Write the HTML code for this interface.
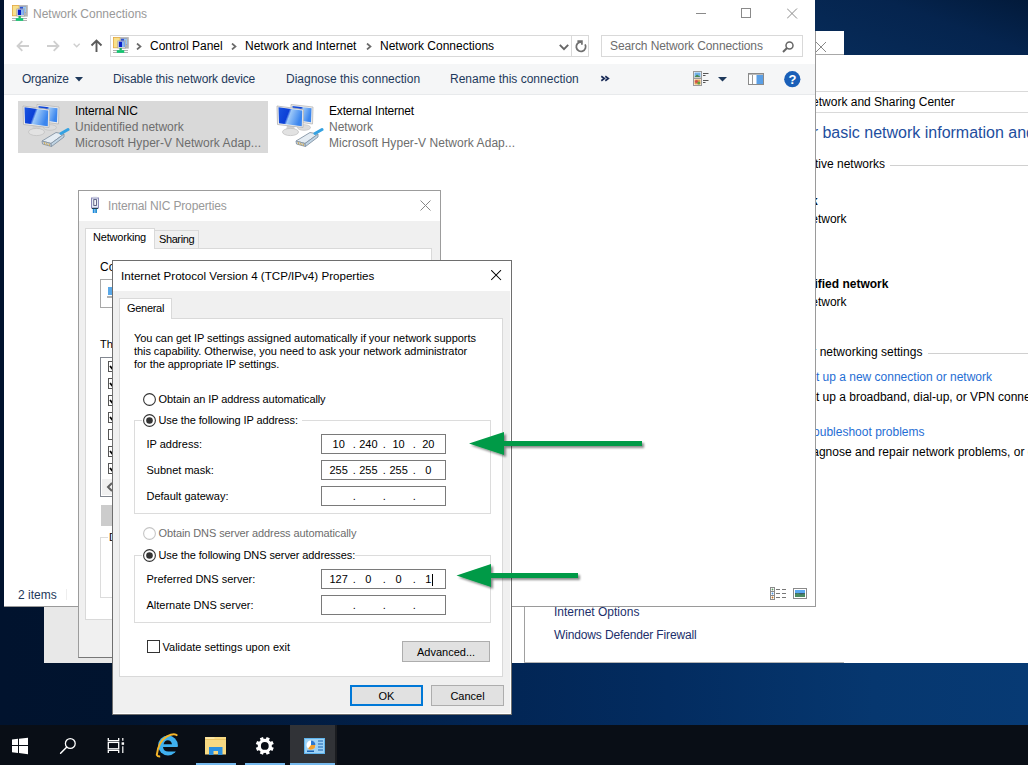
<!DOCTYPE html><html><head><meta charset="utf-8"><style>
html,body{margin:0;padding:0;width:1028px;height:765px;overflow:hidden;position:relative;font-family:"Liberation Sans", sans-serif;}
body{background:linear-gradient(90deg,#01132e 0%,#01142f 12%,#022554 48%,#032c60 65%,#06376f 85%,#073a74 100%);}
</style></head><body>
<div style="position:absolute;left:815px;top:0px;width:213px;height:55px;background:linear-gradient(200deg,#021a3a 0%,#05244e 40%,#072c5a 100%);"></div>
<div style="position:absolute;left:0px;top:0px;width:4px;height:725px;background:#01132e;"></div>
<div style="position:absolute;left:511px;top:55px;width:517px;height:608px;background:#fff;"></div>
<div style="position:absolute;left:524px;top:662px;width:320px;height:1px;background:#b4b4b4;"></div>
<div style="position:absolute;left:815px;top:31px;width:29px;height:24px;background:#fff;"></div>
<svg style="position:absolute;left:815px;top:41px;" width="12" height="12" viewBox="0 0 12 12"><path d="M1 1 L11 11 M11 1 L1 11" stroke="#888" stroke-width="1"/></svg>
<div style="position:absolute;left:815px;top:54px;width:29px;height:1px;background:#a8a8a8;"></div>
<div style="position:absolute;left:815px;top:91px;width:213px;height:1px;background:#d9d9d9;"></div>
<div style="position:absolute;left:354.79999999999995px;width:600px;text-align:right;top:95.84px;font-size:12px;line-height:12px;color:#000;font-weight:normal;white-space:pre;">Network and Sharing Center</div>
<div style="position:absolute;left:815px;top:112px;width:213px;height:1px;background:#d9d9d9;"></div>
<div style="position:absolute;left:812.7px;top:125.46px;font-size:16px;line-height:16px;color:#1e4e9e;font-weight:normal;white-space:pre;">r basic network information and set up connections</div>
<div style="position:absolute;left:285px;width:600px;text-align:right;top:157.84px;font-size:12px;line-height:12px;color:#000;font-weight:normal;white-space:pre;">Active networks</div>
<div style="position:absolute;left:890px;top:165px;width:138px;height:1px;background:#d0d0d0;"></div>
<div style="position:absolute;left:217.79999999999995px;width:600px;text-align:right;top:194.84px;font-size:12px;line-height:12px;color:#000;font-weight:bold;white-space:pre;">Network</div>
<div style="position:absolute;left:246.60000000000002px;width:600px;text-align:right;top:212.84px;font-size:12px;line-height:12px;color:#000;font-weight:normal;white-space:pre;">Public network</div>
<div style="position:absolute;left:288.4px;width:600px;text-align:right;top:277.84px;font-size:12px;line-height:12px;color:#000;font-weight:bold;white-space:pre;">Unidentified network</div>
<div style="position:absolute;left:246.60000000000002px;width:600px;text-align:right;top:295.84px;font-size:12px;line-height:12px;color:#000;font-weight:normal;white-space:pre;">Public network</div>
<div style="position:absolute;left:322.4px;width:600px;text-align:right;top:345.84px;font-size:12px;line-height:12px;color:#000;font-weight:normal;white-space:pre;">Change your networking settings</div>
<div style="position:absolute;left:928px;top:353px;width:100px;height:1px;background:#d0d0d0;"></div>
<div style="position:absolute;left:392px;width:600px;text-align:right;top:370.84px;font-size:12px;line-height:12px;color:#1f6ed4;font-weight:normal;white-space:pre;">Set up a new connection or network</div>
<div style="position:absolute;left:815.9px;top:390.84px;font-size:12px;line-height:12px;color:#000;font-weight:normal;white-space:pre;margin-left:0px;">t up a broadband, dial-up, or VPN connection</div>
<div style="position:absolute;left:324.5px;width:600px;text-align:right;top:425.84px;font-size:12px;line-height:12px;color:#1f6ed4;font-weight:normal;white-space:pre;">Troubleshoot problems</div>
<div style="position:absolute;left:410.4px;width:600px;text-align:right;top:445.84px;font-size:12px;line-height:12px;color:#000;font-weight:normal;white-space:pre;">Diagnose and repair network problems,</div>
<div style="position:absolute;left:1010.4px;top:445.84px;font-size:12px;line-height:12px;color:#000;font-weight:normal;white-space:pre;"> or get</div>
<div style="position:absolute;left:524px;top:606px;width:1px;height:56px;background:#a0a0a0;"></div>
<div style="position:absolute;left:554px;top:605.84px;font-size:12px;line-height:12px;color:#1c2f6b;font-weight:normal;white-space:pre;">Internet Options</div>
<div style="position:absolute;left:554px;top:628.84px;font-size:12px;line-height:12px;color:#1c2f6b;font-weight:normal;white-space:pre;letter-spacing:-0.14px;">Windows Defender Firewall</div>
<div style="position:absolute;left:44px;top:500px;width:467px;height:163px;background:#e8e8e8;"></div>
<div style="position:absolute;left:4px;top:0px;width:811px;height:607px;background:#fff;"></div>
<div style="position:absolute;left:815px;top:31px;width:1px;height:576px;background:#9a9a9a;"></div>
<div style="position:absolute;left:4px;top:606px;width:812px;height:1px;background:#9a9a9a;"></div>
<svg style="position:absolute;left:12px;top:5px;" width="16" height="16" viewBox="0 0 16 16"><path d="M0 13.5 H15 M0 15.5 H15" stroke="#b0b0b0" stroke-width="1"/><rect x="0.4" y="0.4" width="6.8" height="10.4" fill="#f8e08a" stroke="#e3a73f" stroke-width="0.8"/><rect x="6.9" y="0.1" width="8.9" height="11.5" fill="#b4b4b4"/><rect x="8" y="1.8" width="6" height="5.7" fill="#2a50d8"/><rect x="11" y="1.8" width="3" height="5.7" fill="#9ac8f0"/><rect x="4.8" y="3.9" width="7.9" height="7.1" fill="#ececec" stroke="#9a9a9a" stroke-width="0.6"/><rect x="5.8" y="4.6" width="6" height="5.4" fill="#0a20c8"/><rect x="9" y="4.6" width="2.8" height="5.4" fill="#8ab8f0"/><rect x="6.5" y="11" width="2.3" height="2.2" fill="#20b060"/><rect x="3.8" y="13.2" width="7.4" height="2.6" fill="#10c870"/></svg>
<div style="position:absolute;left:33px;top:7.84px;font-size:12px;line-height:12px;color:#999;font-weight:normal;white-space:pre;">Network Connections</div>
<div style="position:absolute;left:696px;top:13px;width:10px;height:1px;background:#8a8a8a;"></div>
<div style="position:absolute;left:741px;top:8px;width:10px;height:10px;background:none;border:1px solid #8a8a8a;box-sizing:border-box;"></div>
<svg style="position:absolute;left:787px;top:8px;" width="11" height="11" viewBox="0 0 11 11"><path d="M0 0.5 L10 10.5 M10 0.5 L0 10.5" stroke="#8a8a8a" stroke-width="1"/></svg>
<svg style="position:absolute;left:16px;top:40px;" width="14" height="12" viewBox="0 0 14 12"><path d="M1.5 6 H13 M6.3 1.2 L1.5 6 L6.3 10.8" stroke="#cfcfcf" stroke-width="1.8" fill="none"/></svg>
<svg style="position:absolute;left:46px;top:40px;" width="14" height="12" viewBox="0 0 14 12"><path d="M1 6 H12.5 M7.7 1.2 L12.5 6 L7.7 10.8" stroke="#cfcfcf" stroke-width="1.8" fill="none"/></svg>
<svg style="position:absolute;left:73px;top:43px;" width="8" height="5" viewBox="0 0 8 5"><path d="M0.7 0.7 L3.7 3.7 L6.7 0.7" stroke="#cfcfcf" stroke-width="1.4" fill="none"/></svg>
<svg style="position:absolute;left:90px;top:39px;" width="13" height="13" viewBox="0 0 13 13"><path d="M6.5 1.5 V13 M1.5 6.5 L6.5 1.5 L11.5 6.5" stroke="#5a5a5a" stroke-width="1.9" fill="none"/></svg>
<div style="position:absolute;left:110px;top:35px;width:479px;height:22px;background:#fff;border:1px solid #d9d9d9;box-sizing:border-box;"></div>
<div style="position:absolute;left:571px;top:35px;width:1px;height:22px;background:#d9d9d9;"></div>
<svg style="position:absolute;left:113px;top:37px;" width="16" height="16" viewBox="0 0 16 16"><path d="M0 13.5 H15 M0 15.5 H15" stroke="#b0b0b0" stroke-width="1"/><rect x="0.4" y="0.4" width="6.8" height="10.4" fill="#f8e08a" stroke="#e3a73f" stroke-width="0.8"/><rect x="6.9" y="0.1" width="8.9" height="11.5" fill="#b4b4b4"/><rect x="8" y="1.8" width="6" height="5.7" fill="#2a50d8"/><rect x="11" y="1.8" width="3" height="5.7" fill="#9ac8f0"/><rect x="4.8" y="3.9" width="7.9" height="7.1" fill="#ececec" stroke="#9a9a9a" stroke-width="0.6"/><rect x="5.8" y="4.6" width="6" height="5.4" fill="#0a20c8"/><rect x="9" y="4.6" width="2.8" height="5.4" fill="#8ab8f0"/><rect x="6.5" y="11" width="2.3" height="2.2" fill="#20b060"/><rect x="3.8" y="13.2" width="7.4" height="2.6" fill="#10c870"/></svg>
<svg style="position:absolute;left:136px;top:43px;" width="6" height="7" viewBox="0 0 6 7"><path d="M1 0.5 L4.5 3.5 L1 6.5" stroke="#6a6a6a" stroke-width="1.7" fill="none"/></svg>
<div style="position:absolute;left:150px;top:39.84px;font-size:12px;line-height:12px;color:#000;font-weight:normal;white-space:pre;">Control Panel</div>
<svg style="position:absolute;left:231px;top:43px;" width="6" height="7" viewBox="0 0 6 7"><path d="M1 0.5 L4.5 3.5 L1 6.5" stroke="#6a6a6a" stroke-width="1.7" fill="none"/></svg>
<div style="position:absolute;left:245px;top:39.84px;font-size:12px;line-height:12px;color:#000;font-weight:normal;white-space:pre;">Network and Internet</div>
<svg style="position:absolute;left:366px;top:43px;" width="6" height="7" viewBox="0 0 6 7"><path d="M1 0.5 L4.5 3.5 L1 6.5" stroke="#6a6a6a" stroke-width="1.7" fill="none"/></svg>
<div style="position:absolute;left:380px;top:39.84px;font-size:12px;line-height:12px;color:#000;font-weight:normal;white-space:pre;">Network Connections</div>
<svg style="position:absolute;left:559px;top:44px;" width="10" height="7" viewBox="0 0 10 7"><path d="M0.8 0.8 L5 5.2 L9.2 0.8" stroke="#666" stroke-width="1.9" fill="none"/></svg>
<svg style="position:absolute;left:572px;top:38px;" width="16" height="16" viewBox="0 0 16 16"><path d="M13.07 6.35 A4.7 4.7 0 1 1 9 4" stroke="#707070" stroke-width="1.8" fill="none"/><path d="M5.4 3.1 H9.9 V6.8" stroke="#707070" stroke-width="1.7" fill="none"/></svg>
<div style="position:absolute;left:601px;top:35px;width:202px;height:22px;background:#fff;border:1px solid #d9d9d9;box-sizing:border-box;"></div>
<div style="position:absolute;left:610px;top:39.84px;font-size:12px;line-height:12px;color:#6d6d6d;font-weight:normal;white-space:pre;letter-spacing:-0.1px;">Search Network Connections</div>
<svg style="position:absolute;left:782px;top:41px;" width="13" height="12" viewBox="0 0 13 12"><circle cx="7.5" cy="4.5" r="3.5" stroke="#666" stroke-width="1.5" fill="none"/><path d="M5 7 L1 11" stroke="#666" stroke-width="2"/></svg>
<div style="position:absolute;left:4px;top:64px;width:811px;height:31px;background:#f5f6f7;"></div>
<div style="position:absolute;left:4px;top:94px;width:811px;height:1px;background:#e8eaec;"></div>
<div style="position:absolute;left:22px;top:72.84px;font-size:12px;line-height:12px;color:#1e395b;font-weight:normal;white-space:pre;letter-spacing:-0.25px;">Organize</div>
<svg style="position:absolute;left:75px;top:77px;" width="8" height="5" viewBox="0 0 8 5"><path d="M0 0 H8 L4 4.5 Z" fill="#1e395b"/></svg>
<div style="position:absolute;left:113px;top:72.84px;font-size:12px;line-height:12px;color:#1e395b;font-weight:normal;white-space:pre;letter-spacing:-0.12px;">Disable this network device</div>
<div style="position:absolute;left:286px;top:72.84px;font-size:12px;line-height:12px;color:#1e395b;font-weight:normal;white-space:pre;">Diagnose this connection</div>
<div style="position:absolute;left:450px;top:72.84px;font-size:12px;line-height:12px;color:#1e395b;font-weight:normal;white-space:pre;">Rename this connection</div>
<svg style="position:absolute;left:598px;top:73px;" width="14" height="11" viewBox="0 0 14 11"><path d="M3.3 3.3 L6.3 5.5 L3.3 7.7 M7.3 3.3 L10.3 5.5 L7.3 7.7" stroke="#1a2c58" stroke-width="1.7" fill="none"/></svg>
<svg style="position:absolute;left:693px;top:71px;" width="17" height="15" viewBox="0 0 17 15"><rect x="0.5" y="0.5" width="8" height="6.5" fill="#fff" stroke="#9a9a9a"/><rect x="1.5" y="1.5" width="6" height="4.5" fill="#6fb0e8"/><path d="M1.5 6 L4 3.5 L7.5 6 Z" fill="#4a8a50"/><rect x="0.5" y="7.5" width="8" height="7" fill="#fff" stroke="#9a9a9a"/><rect x="1.5" y="8.5" width="6" height="5" fill="#e0a050"/><circle cx="3.5" cy="10.5" r="1.6" fill="#d05050"/><circle cx="5.8" cy="12" r="1.5" fill="#60a040"/><path d="M10 2.5 H15.5 M10 4.5 H12.5 M10 9.5 H15.5 M10 11.5 H12.5" stroke="#555" stroke-width="1"/></svg>
<svg style="position:absolute;left:718px;top:77px;" width="9" height="5" viewBox="0 0 9 5"><path d="M0 0 H9 L4.5 4.5 Z" fill="#1e395b"/></svg>
<svg style="position:absolute;left:748px;top:73px;" width="16" height="12" viewBox="0 0 16 12"><rect x="0.5" y="0.5" width="15" height="11" fill="#fff" stroke="#8a8a8a"/><rect x="1" y="1" width="14" height="1" fill="#bbb"/><rect x="8.5" y="2" width="6.5" height="9" fill="#5a9fe6"/><path d="M4.5 2 V11" stroke="#9a9a9a"/></svg>
<svg style="position:absolute;left:784px;top:71px;" width="17" height="17" viewBox="0 0 17 17"><circle cx="8.3" cy="8.2" r="8.1" fill="#1a5fb8"/><text x="8.4" y="13.2" font-family="Liberation Sans" font-weight="bold" font-size="13" fill="#fff" text-anchor="middle">?</text></svg>
<div style="position:absolute;left:18px;top:101px;width:250px;height:52px;background:#d9d9d9;"></div>
<svg style="position:absolute;left:18px;top:100px;" width="52" height="52" viewBox="0 0 52 52">
<defs><linearGradient id="scr" x1="0" y1="0" x2="1" y2="0.3"><stop offset="0" stop-color="#1a55e0"/><stop offset="0.45" stop-color="#0b3fd6"/><stop offset="0.55" stop-color="#9cc8f8"/><stop offset="1" stop-color="#3c86ee"/></linearGradient></defs>
<ellipse cx="32" cy="27.5" rx="6.5" ry="2.8" fill="#dcdcdc" stroke="#c4c4c4" stroke-width="0.8"/>
<path d="M19 4.5 L41 7 L40.5 24 L19 21 Z" fill="#ececec" stroke="#b8b8b8" stroke-width="0.8"/>
<path d="M20.5 6 L39.5 8.3 L39 22.3 L20.5 19.5 Z" fill="url(#scr)"/>
<path d="M15 25 L22 25 L23 31 L14 31 Z" fill="#d0d0d0"/>
<ellipse cx="18.5" cy="32" rx="8" ry="3.6" fill="#e2e2e2" stroke="#c2c2c2" stroke-width="0.8"/>
<path d="M5 6 L31.5 9.5 L31 27.5 L5.5 24.5 Z" fill="#efefef" stroke="#b4b4b4" stroke-width="0.8"/>
<path d="M6.5 7.3 L30.2 10.5 L29.8 26.2 L7 23.3 Z" fill="url(#scr)"/>
<path d="M24 41 L38 32.5 L46 34 L33 43.5 Z" fill="#e4ecf3" stroke="#8494a4" stroke-width="0.9"/>
<path d="M24 41 L24.5 44 L33.5 46.5 L33 43.5 Z" fill="#cdd6df" stroke="#8494a4" stroke-width="0.9"/>
<path d="M33.5 46.5 L46 37 L46 34 L33 43.5 Z" fill="#c0d4e4" stroke="#8494a4" stroke-width="0.9"/>
<path d="M26 42 L27 44.5 M28.5 42.8 L29.3 45.2 M31 43.5 L31.6 45.8" stroke="#d0a030" stroke-width="0.8"/>
<path d="M43 33.5 L50 29.5" stroke="#35a2e2" stroke-width="3" stroke-linecap="round"/>
</svg>
<div style="position:absolute;left:75px;top:104.84px;font-size:12px;line-height:12px;color:#000;font-weight:normal;white-space:pre;letter-spacing:-0.1px;">Internal NIC</div>
<div style="position:absolute;left:75px;top:120.84px;font-size:12px;line-height:12px;color:#6d6d6d;font-weight:normal;white-space:pre;">Unidentified network</div>
<div style="position:absolute;left:75px;top:136.84px;font-size:12px;line-height:12px;color:#6d6d6d;font-weight:normal;white-space:pre;letter-spacing:0.06px;">Microsoft Hyper-V Network Adap...</div>
<svg style="position:absolute;left:272px;top:100px;" width="52" height="52" viewBox="0 0 52 52">
<defs><linearGradient id="scr" x1="0" y1="0" x2="1" y2="0.3"><stop offset="0" stop-color="#1a55e0"/><stop offset="0.45" stop-color="#0b3fd6"/><stop offset="0.55" stop-color="#9cc8f8"/><stop offset="1" stop-color="#3c86ee"/></linearGradient></defs>
<ellipse cx="32" cy="27.5" rx="6.5" ry="2.8" fill="#dcdcdc" stroke="#c4c4c4" stroke-width="0.8"/>
<path d="M19 4.5 L41 7 L40.5 24 L19 21 Z" fill="#ececec" stroke="#b8b8b8" stroke-width="0.8"/>
<path d="M20.5 6 L39.5 8.3 L39 22.3 L20.5 19.5 Z" fill="url(#scr)"/>
<path d="M15 25 L22 25 L23 31 L14 31 Z" fill="#d0d0d0"/>
<ellipse cx="18.5" cy="32" rx="8" ry="3.6" fill="#e2e2e2" stroke="#c2c2c2" stroke-width="0.8"/>
<path d="M5 6 L31.5 9.5 L31 27.5 L5.5 24.5 Z" fill="#efefef" stroke="#b4b4b4" stroke-width="0.8"/>
<path d="M6.5 7.3 L30.2 10.5 L29.8 26.2 L7 23.3 Z" fill="url(#scr)"/>
<path d="M24 41 L38 32.5 L46 34 L33 43.5 Z" fill="#e4ecf3" stroke="#8494a4" stroke-width="0.9"/>
<path d="M24 41 L24.5 44 L33.5 46.5 L33 43.5 Z" fill="#cdd6df" stroke="#8494a4" stroke-width="0.9"/>
<path d="M33.5 46.5 L46 37 L46 34 L33 43.5 Z" fill="#c0d4e4" stroke="#8494a4" stroke-width="0.9"/>
<path d="M26 42 L27 44.5 M28.5 42.8 L29.3 45.2 M31 43.5 L31.6 45.8" stroke="#d0a030" stroke-width="0.8"/>
<path d="M43 33.5 L50 29.5" stroke="#35a2e2" stroke-width="3" stroke-linecap="round"/>
</svg>
<div style="position:absolute;left:329px;top:104.84px;font-size:12px;line-height:12px;color:#000;font-weight:normal;white-space:pre;letter-spacing:-0.18px;">External Internet</div>
<div style="position:absolute;left:329px;top:120.84px;font-size:12px;line-height:12px;color:#6d6d6d;font-weight:normal;white-space:pre;">Network</div>
<div style="position:absolute;left:329px;top:136.84px;font-size:12px;line-height:12px;color:#6d6d6d;font-weight:normal;white-space:pre;letter-spacing:0.06px;">Microsoft Hyper-V Network Adap...</div>
<div style="position:absolute;left:18px;top:588.84px;font-size:12px;line-height:12px;color:#1e395b;font-weight:normal;white-space:pre;">2 items</div>
<div style="position:absolute;left:66px;top:589px;width:1px;height:11px;background:#eeeeee;"></div>
<svg style="position:absolute;left:770px;top:587px;" width="18" height="13" viewBox="0 0 18 13"><rect x="0.5" y="0.5" width="4" height="12" fill="#fff" stroke="#8a8a8a"/><path d="M0.5 4.5 H4.5 M0.5 8.5 H4.5" stroke="#8a8a8a"/><circle cx="2.5" cy="2.5" r="0.9" fill="#5a9a60"/><circle cx="2.5" cy="6.5" r="0.9" fill="#4a90e0"/><circle cx="2.5" cy="10.5" r="0.9" fill="#c07020"/><path d="M6 2.5 H10 M12 2.5 H16 M6 6.5 H10 M12 6.5 H16 M6 10.5 H10 M12 10.5 H16" stroke="#777" stroke-width="1.1"/></svg>
<svg style="position:absolute;left:793px;top:588px;" width="14" height="11" viewBox="0 0 14 11"><rect x="0.5" y="0.5" width="13" height="10" fill="#fff" stroke="#8a8a8a"/><rect x="2" y="2" width="10" height="7" fill="#5aa8f0"/><rect x="2" y="5" width="10" height="4" fill="#3a5a70"/><path d="M2 6 L5 5 L8 6.5 L12 5.5 V9 H2 Z" fill="#4a8a60"/></svg>
<div style="position:absolute;left:78px;top:190px;width:363px;height:468px;background:#f0f0f0;border:1px solid #9c9c9c;box-sizing:border-box;border-bottom-color:#777;"></div>
<div style="position:absolute;left:79px;top:191px;width:361px;height:30px;background:#fff;"></div>
<svg style="position:absolute;left:86px;top:194px;" width="18" height="22" viewBox="0 0 18 22"><rect x="5.5" y="4" width="7" height="10" fill="#e4ecf4" stroke="#8a88b8" stroke-width="1"/><rect x="7" y="2.8" width="4" height="1.4" fill="#c8cce0"/><rect x="7.8" y="5.6" width="2.6" height="5.8" fill="#fff" stroke="#505078" stroke-width="0.9"/><rect x="6" y="14" width="6" height="1" fill="#204050"/><rect x="6.8" y="15" width="1.8" height="4" fill="#1a8ae0"/><rect x="9.2" y="15" width="1.8" height="4" fill="#2a90d0"/></svg>
<div style="position:absolute;left:108px;top:199.84px;font-size:12px;line-height:12px;color:#999;font-weight:normal;white-space:pre;letter-spacing:-0.15px;">Internal NIC Properties</div>
<svg style="position:absolute;left:420px;top:200px;" width="11" height="11" viewBox="0 0 11 11"><path d="M0.5 0.5 L10.5 10.5 M10.5 0.5 L0.5 10.5" stroke="#888" stroke-width="1"/></svg>
<div style="position:absolute;left:85px;top:248px;width:347px;height:372px;background:#fff;border:1px solid #d9d9d9;box-sizing:border-box;"></div>
<div style="position:absolute;left:85px;top:228px;width:70px;height:21px;background:#fff;border:1px solid #d9d9d9;box-sizing:border-box;border-bottom:none;"></div>
<div style="position:absolute;left:155px;top:230px;width:44px;height:18px;background:#f0f0f0;border:1px solid #d9d9d9;box-sizing:border-box;border-bottom:none;border-left:none;"></div>
<div style="position:absolute;left:93px;top:231.69px;font-size:11px;line-height:11px;color:#000;font-weight:normal;white-space:pre;letter-spacing:-0.2px;">Networking</div>
<div style="position:absolute;left:159px;top:233.69px;font-size:11px;line-height:11px;color:#000;font-weight:normal;white-space:pre;letter-spacing:-0.4px;">Sharing</div>
<div style="position:absolute;left:100px;top:261.34px;font-size:12px;line-height:12px;color:#000;font-weight:normal;white-space:pre;">Co</div>
<div style="position:absolute;left:100px;top:279px;width:60px;height:29px;background:#fff;border:1px solid #a8a8a8;box-sizing:border-box;"></div>
<div style="position:absolute;left:108px;top:287px;width:4px;height:8px;background:#5aa8e8;"></div>
<div style="position:absolute;left:107px;top:296px;width:5px;height:2px;background:#b0b0b0;"></div>
<div style="position:absolute;left:100px;top:338.69px;font-size:11px;line-height:11px;color:#000;font-weight:normal;white-space:pre;">Th</div>
<div style="position:absolute;left:100px;top:357px;width:60px;height:140px;background:#fff;border:1px solid #828790;box-sizing:border-box;"></div>
<div style="position:absolute;left:102px;top:479px;width:56px;height:16px;background:#f0f0f0;"></div>
<div style="position:absolute;left:108px;top:361px;width:11px;height:11px;background:#fff;border:1px solid #555;box-sizing:border-box;"></div>
<svg style="position:absolute;left:108px;top:361px;" width="11" height="11" viewBox="0 0 11 11"><path d="M2 5 L4.3 7.8 L9 2.5" stroke="#000" stroke-width="1.8" fill="none"/></svg>
<div style="position:absolute;left:108px;top:378px;width:11px;height:11px;background:#fff;border:1px solid #555;box-sizing:border-box;"></div>
<svg style="position:absolute;left:108px;top:378px;" width="11" height="11" viewBox="0 0 11 11"><path d="M2 5 L4.3 7.8 L9 2.5" stroke="#000" stroke-width="1.8" fill="none"/></svg>
<div style="position:absolute;left:108px;top:395px;width:11px;height:11px;background:#fff;border:1px solid #555;box-sizing:border-box;"></div>
<svg style="position:absolute;left:108px;top:395px;" width="11" height="11" viewBox="0 0 11 11"><path d="M2 5 L4.3 7.8 L9 2.5" stroke="#000" stroke-width="1.8" fill="none"/></svg>
<div style="position:absolute;left:108px;top:412px;width:11px;height:11px;background:#fff;border:1px solid #555;box-sizing:border-box;"></div>
<svg style="position:absolute;left:108px;top:412px;" width="11" height="11" viewBox="0 0 11 11"><path d="M2 5 L4.3 7.8 L9 2.5" stroke="#000" stroke-width="1.8" fill="none"/></svg>
<div style="position:absolute;left:108px;top:429px;width:11px;height:11px;background:#fff;border:1px solid #555;box-sizing:border-box;"></div>
<div style="position:absolute;left:108px;top:446px;width:11px;height:11px;background:#fff;border:1px solid #555;box-sizing:border-box;"></div>
<svg style="position:absolute;left:108px;top:446px;" width="11" height="11" viewBox="0 0 11 11"><path d="M2 5 L4.3 7.8 L9 2.5" stroke="#000" stroke-width="1.8" fill="none"/></svg>
<div style="position:absolute;left:108px;top:463px;width:11px;height:11px;background:#fff;border:1px solid #555;box-sizing:border-box;"></div>
<svg style="position:absolute;left:108px;top:463px;" width="11" height="11" viewBox="0 0 11 11"><path d="M2 5 L4.3 7.8 L9 2.5" stroke="#000" stroke-width="1.8" fill="none"/></svg>
<svg style="position:absolute;left:106px;top:482px;" width="8" height="10" viewBox="0 0 8 10"><path d="M6 1 L2 5 L6 9" stroke="#606060" stroke-width="2" fill="none"/></svg>
<div style="position:absolute;left:101px;top:505px;width:60px;height:21px;background:#cccccc;"></div>
<div style="position:absolute;left:100px;top:537px;width:61px;height:61px;background:none;border:1px solid #dcdcdc;box-sizing:border-box;"></div>
<div style="position:absolute;left:108px;top:531px;width:14px;height:12px;background:#fff;"></div>
<div style="position:absolute;left:109px;top:531.69px;font-size:11px;line-height:11px;color:#000;font-weight:normal;white-space:pre;">D</div>
<div style="position:absolute;left:112px;top:260px;width:400px;height:455px;background:#f0f0f0;border:1px solid #6e6e6e;box-sizing:border-box;"></div>
<div style="position:absolute;left:113px;top:713px;width:398px;height:1px;background:#fff;"></div>
<div style="position:absolute;left:510px;top:291px;width:1px;height:423px;background:#fff;"></div>
<div style="position:absolute;left:113px;top:261px;width:398px;height:30px;background:#fff;"></div>
<div style="position:absolute;left:121px;top:270.18px;font-size:11.6px;line-height:11.6px;color:#000;font-weight:normal;white-space:pre;">Internet Protocol Version 4 (TCP/IPv4) Properties</div>
<svg style="position:absolute;left:491px;top:270px;" width="11" height="11" viewBox="0 0 11 11"><path d="M0.2 0.2 L10 10 M10 0.2 L0.2 10" stroke="#000" stroke-width="1.05"/></svg>
<div style="position:absolute;left:119px;top:318px;width:384px;height:359px;background:#fff;border:1px solid #d9d9d9;box-sizing:border-box;"></div>
<div style="position:absolute;left:119px;top:298px;width:53px;height:21px;background:#fff;border:1px solid #d9d9d9;box-sizing:border-box;border-bottom:none;"></div>
<div style="position:absolute;left:127px;top:302.69px;font-size:11px;line-height:11px;color:#000;font-weight:normal;white-space:pre;letter-spacing:-0.3px;">General</div>
<div style="position:absolute;left:134px;top:332.69px;font-size:11px;line-height:11px;color:#000;font-weight:normal;white-space:pre;letter-spacing:-0.06px;">You can get IP settings assigned automatically if your network supports</div>
<div style="position:absolute;left:134px;top:345.69px;font-size:11px;line-height:11px;color:#000;font-weight:normal;white-space:pre;letter-spacing:-0.06px;">this capability. Otherwise, you need to ask your network administrator</div>
<div style="position:absolute;left:134px;top:358.69px;font-size:11px;line-height:11px;color:#000;font-weight:normal;white-space:pre;letter-spacing:-0.06px;">for the appropriate IP settings.</div>
<svg style="position:absolute;left:142.5px;top:393.0px;" width="13" height="13" viewBox="0 0 13 13"><circle cx="6.5" cy="6.5" r="5.9" fill="#fff" stroke="#333" stroke-width="1.1"/></svg>
<div style="position:absolute;left:158.5px;top:393.69px;font-size:11px;line-height:11px;color:#000;font-weight:normal;white-space:pre;letter-spacing:-0.1px;">Obtain an IP address automatically</div>
<div style="position:absolute;left:134px;top:420px;width:357px;height:94px;background:none;border:1px solid #dcdcdc;box-sizing:border-box;"></div>
<div style="position:absolute;left:142px;top:413px;width:160px;height:14px;background:#fff;"></div>
<svg style="position:absolute;left:142.5px;top:414.0px;" width="13" height="13" viewBox="0 0 13 13"><circle cx="6.5" cy="6.5" r="5.9" fill="#fff" stroke="#333" stroke-width="1.1"/><circle cx="6.5" cy="6.5" r="3.3" fill="#333"/></svg>
<div style="position:absolute;left:158.5px;top:414.69px;font-size:11px;line-height:11px;color:#000;font-weight:normal;white-space:pre;letter-spacing:-0.1px;">Use the following IP address:</div>
<div style="position:absolute;left:146.5px;top:438.69px;font-size:11px;line-height:11px;color:#000;font-weight:normal;white-space:pre;">IP address:</div>
<div style="position:absolute;left:146.5px;top:464.69px;font-size:11px;line-height:11px;color:#000;font-weight:normal;white-space:pre;">Subnet mask:</div>
<div style="position:absolute;left:146.5px;top:490.69px;font-size:11px;line-height:11px;color:#000;font-weight:normal;white-space:pre;">Default gateway:</div>
<div style="position:absolute;left:321px;top:434px;width:125px;height:20px;background:#fff;border:1px solid #7a7a7a;box-sizing:border-box;"></div>
<div style="position:absolute;left:138.7px;width:400px;text-align:center;top:438.89px;font-size:11px;line-height:11px;color:#000;font-weight:normal;white-space:pre;">10</div>
<div style="position:absolute;left:168.39999999999998px;width:400px;text-align:center;top:438.89px;font-size:11px;line-height:11px;color:#000;font-weight:normal;white-space:pre;">240</div>
<div style="position:absolute;left:198.60000000000002px;width:400px;text-align:center;top:438.89px;font-size:11px;line-height:11px;color:#000;font-weight:normal;white-space:pre;">10</div>
<div style="position:absolute;left:228.3px;width:400px;text-align:center;top:438.89px;font-size:11px;line-height:11px;color:#000;font-weight:normal;white-space:pre;">20</div>
<div style="position:absolute;left:154.39999999999998px;width:400px;text-align:center;top:438.89px;font-size:11px;line-height:11px;color:#000;font-weight:normal;white-space:pre;">.</div>
<div style="position:absolute;left:184.3px;width:400px;text-align:center;top:438.89px;font-size:11px;line-height:11px;color:#000;font-weight:normal;white-space:pre;">.</div>
<div style="position:absolute;left:214.39999999999998px;width:400px;text-align:center;top:438.89px;font-size:11px;line-height:11px;color:#000;font-weight:normal;white-space:pre;">.</div>
<div style="position:absolute;left:321px;top:460px;width:125px;height:20px;background:#fff;border:1px solid #7a7a7a;box-sizing:border-box;"></div>
<div style="position:absolute;left:138.7px;width:400px;text-align:center;top:464.89px;font-size:11px;line-height:11px;color:#000;font-weight:normal;white-space:pre;">255</div>
<div style="position:absolute;left:168.39999999999998px;width:400px;text-align:center;top:464.89px;font-size:11px;line-height:11px;color:#000;font-weight:normal;white-space:pre;">255</div>
<div style="position:absolute;left:198.60000000000002px;width:400px;text-align:center;top:464.89px;font-size:11px;line-height:11px;color:#000;font-weight:normal;white-space:pre;">255</div>
<div style="position:absolute;left:228.3px;width:400px;text-align:center;top:464.89px;font-size:11px;line-height:11px;color:#000;font-weight:normal;white-space:pre;">0</div>
<div style="position:absolute;left:154.39999999999998px;width:400px;text-align:center;top:464.89px;font-size:11px;line-height:11px;color:#000;font-weight:normal;white-space:pre;">.</div>
<div style="position:absolute;left:184.3px;width:400px;text-align:center;top:464.89px;font-size:11px;line-height:11px;color:#000;font-weight:normal;white-space:pre;">.</div>
<div style="position:absolute;left:214.39999999999998px;width:400px;text-align:center;top:464.89px;font-size:11px;line-height:11px;color:#000;font-weight:normal;white-space:pre;">.</div>
<div style="position:absolute;left:321px;top:486px;width:125px;height:20px;background:#fff;border:1px solid #7a7a7a;box-sizing:border-box;"></div>
<div style="position:absolute;left:154.39999999999998px;width:400px;text-align:center;top:490.89px;font-size:11px;line-height:11px;color:#000;font-weight:normal;white-space:pre;">.</div>
<div style="position:absolute;left:184.3px;width:400px;text-align:center;top:490.89px;font-size:11px;line-height:11px;color:#000;font-weight:normal;white-space:pre;">.</div>
<div style="position:absolute;left:214.39999999999998px;width:400px;text-align:center;top:490.89px;font-size:11px;line-height:11px;color:#000;font-weight:normal;white-space:pre;">.</div>
<svg style="position:absolute;left:142.5px;top:527.0px;" width="13" height="13" viewBox="0 0 13 13"><circle cx="6.5" cy="6.5" r="5.9" fill="#fff" stroke="#c5c5c5" stroke-width="1.1"/></svg>
<div style="position:absolute;left:158.5px;top:527.69px;font-size:11px;line-height:11px;color:#6d6d6d;font-weight:normal;white-space:pre;letter-spacing:-0.1px;">Obtain DNS server address automatically</div>
<div style="position:absolute;left:134px;top:555px;width:357px;height:68px;background:none;border:1px solid #dcdcdc;box-sizing:border-box;"></div>
<div style="position:absolute;left:142px;top:548px;width:213px;height:14px;background:#fff;"></div>
<svg style="position:absolute;left:142.5px;top:549.0px;" width="13" height="13" viewBox="0 0 13 13"><circle cx="6.5" cy="6.5" r="5.9" fill="#fff" stroke="#333" stroke-width="1.1"/><circle cx="6.5" cy="6.5" r="3.3" fill="#333"/></svg>
<div style="position:absolute;left:158.5px;top:549.69px;font-size:11px;line-height:11px;color:#000;font-weight:normal;white-space:pre;letter-spacing:-0.1px;">Use the following DNS server addresses:</div>
<div style="position:absolute;left:146.5px;top:573.69px;font-size:11px;line-height:11px;color:#000;font-weight:normal;white-space:pre;">Preferred DNS server:</div>
<div style="position:absolute;left:146.5px;top:599.69px;font-size:11px;line-height:11px;color:#000;font-weight:normal;white-space:pre;">Alternate DNS server:</div>
<div style="position:absolute;left:321px;top:569px;width:125px;height:20px;background:#fff;border:1px solid #7a7a7a;box-sizing:border-box;"></div>
<div style="position:absolute;left:138.7px;width:400px;text-align:center;top:573.89px;font-size:11px;line-height:11px;color:#000;font-weight:normal;white-space:pre;">127</div>
<div style="position:absolute;left:168.39999999999998px;width:400px;text-align:center;top:573.89px;font-size:11px;line-height:11px;color:#000;font-weight:normal;white-space:pre;">0</div>
<div style="position:absolute;left:198.60000000000002px;width:400px;text-align:center;top:573.89px;font-size:11px;line-height:11px;color:#000;font-weight:normal;white-space:pre;">0</div>
<div style="position:absolute;left:228.3px;width:400px;text-align:center;top:573.89px;font-size:11px;line-height:11px;color:#000;font-weight:normal;white-space:pre;">1</div>
<div style="position:absolute;left:154.39999999999998px;width:400px;text-align:center;top:573.89px;font-size:11px;line-height:11px;color:#000;font-weight:normal;white-space:pre;">.</div>
<div style="position:absolute;left:184.3px;width:400px;text-align:center;top:573.89px;font-size:11px;line-height:11px;color:#000;font-weight:normal;white-space:pre;">.</div>
<div style="position:absolute;left:214.39999999999998px;width:400px;text-align:center;top:573.89px;font-size:11px;line-height:11px;color:#000;font-weight:normal;white-space:pre;">.</div>
<div style="position:absolute;left:432px;top:574px;width:1px;height:12px;background:#000;"></div>
<div style="position:absolute;left:321px;top:595px;width:125px;height:20px;background:#fff;border:1px solid #7a7a7a;box-sizing:border-box;"></div>
<div style="position:absolute;left:154.39999999999998px;width:400px;text-align:center;top:599.89px;font-size:11px;line-height:11px;color:#000;font-weight:normal;white-space:pre;">.</div>
<div style="position:absolute;left:184.3px;width:400px;text-align:center;top:599.89px;font-size:11px;line-height:11px;color:#000;font-weight:normal;white-space:pre;">.</div>
<div style="position:absolute;left:214.39999999999998px;width:400px;text-align:center;top:599.89px;font-size:11px;line-height:11px;color:#000;font-weight:normal;white-space:pre;">.</div>
<div style="position:absolute;left:147px;top:640px;width:13px;height:13px;background:#fff;border:1px solid #333;box-sizing:border-box;"></div>
<div style="position:absolute;left:162.5px;top:641.69px;font-size:11px;line-height:11px;color:#000;font-weight:normal;white-space:pre;">Validate settings upon exit</div>
<div style="position:absolute;left:402px;top:641px;width:88px;height:21px;background:#e1e1e1;border:1px solid #adadad;box-sizing:border-box;"></div>
<div style="position:absolute;left:246.0px;width:400px;text-align:center;top:646.69px;font-size:11px;line-height:11px;color:#000;font-weight:normal;white-space:pre;">Advanced...</div>
<div style="position:absolute;left:350px;top:685px;width:73px;height:21px;background:#e1e1e1;border:1px solid #0078d7;box-sizing:border-box;"></div>
<div style="position:absolute;left:351px;top:686px;width:71px;height:19px;background:none;border:1px solid #0078d7;box-sizing:border-box;"></div>
<div style="position:absolute;left:186.5px;width:400px;text-align:center;top:690.69px;font-size:11px;line-height:11px;color:#000;font-weight:normal;white-space:pre;">OK</div>
<div style="position:absolute;left:431px;top:685px;width:73px;height:21px;background:#e1e1e1;border:1px solid #adadad;box-sizing:border-box;"></div>
<div style="position:absolute;left:267.5px;width:400px;text-align:center;top:690.69px;font-size:11px;line-height:11px;color:#000;font-weight:normal;white-space:pre;">Cancel</div>
<svg style="position:absolute;left:440px;top:420px;" width="220" height="50" viewBox="0 0 220 50"><defs><filter id="sh" x="-10%" y="-30%" width="130%" height="180%"><feGaussianBlur in="SourceAlpha" stdDeviation="1.2"/><feOffset dx="2" dy="2"/><feComponentTransfer><feFuncA type="linear" slope="0.45"/></feComponentTransfer><feMerge><feMergeNode/><feMergeNode in="SourceGraphic"/></feMerge></filter></defs><path d="M29 23.5 L64 12 L64 21 L202 21 L202 26 L64 26 L64 35 Z" fill="#049a46" filter="url(#sh)"/></svg>
<svg style="position:absolute;left:440px;top:550px;" width="160" height="50" viewBox="0 0 160 50"><defs><filter id="sh2" x="-10%" y="-30%" width="130%" height="180%"><feGaussianBlur in="SourceAlpha" stdDeviation="1.2"/><feOffset dx="2" dy="2"/><feComponentTransfer><feFuncA type="linear" slope="0.45"/></feComponentTransfer><feMerge><feMergeNode/><feMergeNode in="SourceGraphic"/></feMerge></filter></defs><path d="M16.5 25.5 L51 14 L51 23 L138 23 L138 28 L51 28 L51 37 Z" fill="#049a46" filter="url(#sh2)"/></svg>
<div style="position:absolute;left:0px;top:725px;width:1028px;height:40px;background:#090e16;"></div>
<svg style="position:absolute;left:10px;top:736px;" width="20" height="20" viewBox="0 0 20 20"><path d="M2 3.4 L8 2.8 V9 H2 Z M9 2.7 L18 1.8 V9 H9 Z M2 10 H8 V17 L2 16.3 Z M9 10 H18 V18.2 L9 17.1 Z" fill="#fff"/></svg>
<svg style="position:absolute;left:59px;top:736px;" width="19" height="19" viewBox="0 0 19 19"><circle cx="11.3" cy="7.5" r="4.9" stroke="#fff" stroke-width="1.3" fill="none"/><path d="M7.6 11.3 L1.6 17.3" stroke="#fff" stroke-width="1.5" stroke-linecap="round"/></svg>
<svg style="position:absolute;left:100px;top:732px;" width="30" height="28" viewBox="0 0 30 28"><path d="M8.3 5.9 V8.6 H18.7 V5.9 M8.3 21 V18.4 H18.7 V21" stroke="#fff" stroke-width="1.3" fill="none"/><rect x="8.3" y="10.4" width="10.4" height="6.4" stroke="#fff" stroke-width="1.3" fill="none"/><path d="M22.8 5.9 V8.8 M22.8 14.3 V21" stroke="#fff" stroke-width="1.2"/><rect x="21.6" y="10.3" width="2.5" height="2.5" fill="#fff"/></svg>
<svg style="position:absolute;left:150px;top:728px;" width="35" height="34" viewBox="0 0 35 34"><circle cx="18" cy="17.5" r="9.9" fill="#3fb0ef"/><path d="M13.6 16.2 Q14.5 12.3 17.8 12.3 Q21.1 12.3 22 16.2 Z" fill="#090e16"/><path d="M13 19 Q13.5 23.6 18.5 23.6 L28.5 23.6 L28.5 19 Z" fill="#090e16"/><path d="M27.3 7.6 Q24.5 4.5 17 8.3 Q8.5 13 6.8 26.8 Q7.5 28.6 10.2 28.4" stroke="#f4b52a" stroke-width="2" fill="none"/></svg>
<svg style="position:absolute;left:204px;top:736px;" width="24" height="20" viewBox="0 0 24 20"><rect x="1" y="1" width="21" height="17.5" fill="#f7d982"/><rect x="1.5" y="1.2" width="9" height="2" fill="#fbe6a8"/><rect x="1" y="3.2" width="21" height="0.8" fill="#e8c060"/><path d="M5 19 V11 H18.5 V19 H14 V15 H9.5 V19 Z" fill="#2a90e0"/></svg>
<div style="position:absolute;left:196px;top:763px;width:40px;height:2px;background:#76b9ed;"></div>
<svg style="position:absolute;left:255px;top:736px;" width="20" height="20" viewBox="0 0 20 20"><g transform="translate(9.8 9.9)"><circle r="5.5" fill="none" stroke="#fff" stroke-width="3.2"/><rect x="-1.7" y="-9" width="3.4" height="3.6" fill="#fff" transform="rotate(22.5)"/><rect x="-1.7" y="-9" width="3.4" height="3.6" fill="#fff" transform="rotate(67.5)"/><rect x="-1.7" y="-9" width="3.4" height="3.6" fill="#fff" transform="rotate(112.5)"/><rect x="-1.7" y="-9" width="3.4" height="3.6" fill="#fff" transform="rotate(157.5)"/><rect x="-1.7" y="-9" width="3.4" height="3.6" fill="#fff" transform="rotate(202.5)"/><rect x="-1.7" y="-9" width="3.4" height="3.6" fill="#fff" transform="rotate(247.5)"/><rect x="-1.7" y="-9" width="3.4" height="3.6" fill="#fff" transform="rotate(292.5)"/><rect x="-1.7" y="-9" width="3.4" height="3.6" fill="#fff" transform="rotate(337.5)"/></g></svg>
<div style="position:absolute;left:245px;top:763px;width:40px;height:2px;background:#76b9ed;"></div>
<div style="position:absolute;left:290px;top:725px;width:45px;height:40px;background:#313337;"></div>
<div style="position:absolute;left:335px;top:725px;width:2px;height:40px;background:#1a1c20;"></div>
<div style="position:absolute;left:290px;top:763px;width:45px;height:2px;background:#76b9ed;"></div>
<svg style="position:absolute;left:304px;top:738px;" width="21" height="16" viewBox="0 0 21 16"><rect x="0" y="0" width="21" height="16" fill="#5fb4ec"/><rect x="1" y="1" width="19" height="14" fill="#9dd2f5"/><circle cx="7" cy="7" r="4.5" fill="#fff"/><path d="M7 7 V2.5 A4.5 4.5 0 0 1 11.5 7 Z" fill="#2a78d0"/><path d="M7 7 L11.5 7 A4.5 4.5 0 0 1 4 10.5 Z" fill="#f0a030"/><path d="M14 3 H19 M14 6 H19 M14 9 H19 M14 12 H19" stroke="#1a60b0" stroke-width="1.2"/><rect x="3" y="12.5" width="7" height="1.5" fill="#1a60b0"/></svg>
</body></html>
